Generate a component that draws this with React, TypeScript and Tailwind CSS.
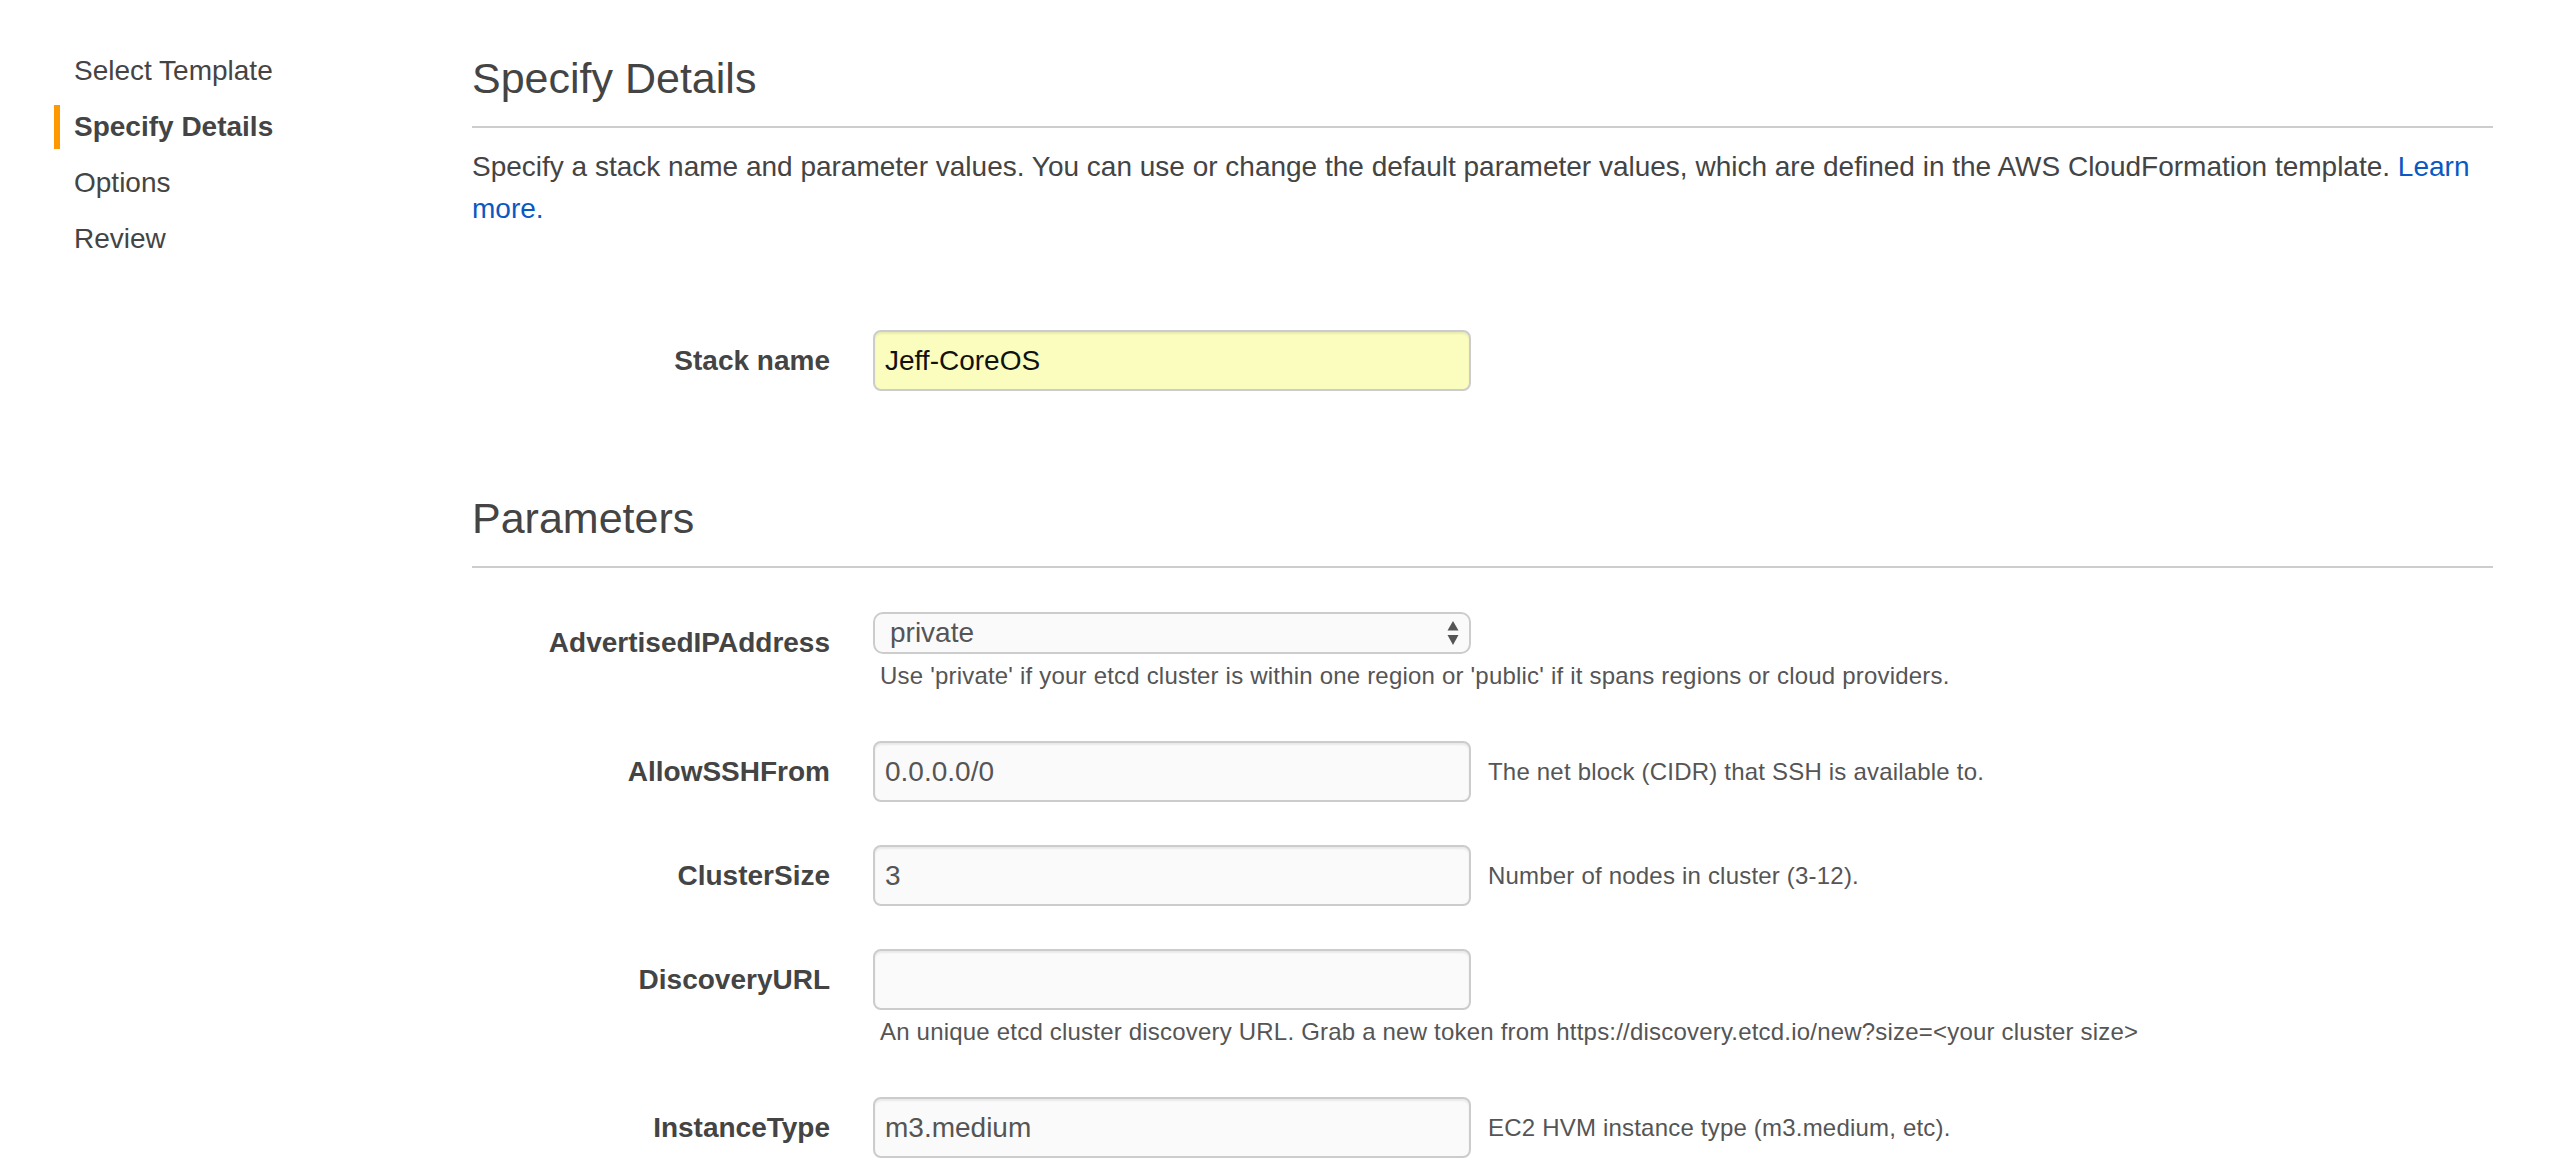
import React from "react";

type RowProps = {
  label: string;
  children: React.ReactNode;
  inline?: string;
  below?: string;
};

function Row({ label, children, inline, below }: RowProps) {
  return (
    <div className="flex mb-[43px]">
      <div className="w-[358px] shrink-0 mr-[43px] pt-[9px] text-right text-[28px] leading-[44px] font-bold text-[#444]">
        {label}
      </div>
      <div className="flex flex-col">
        <div className="flex items-center">
          {children}
          {inline && (
            <span className="ml-[17px] text-[24px] leading-[36px] tracking-[0.2px] text-[#555] whitespace-nowrap">
              {inline}
            </span>
          )}
        </div>
        {below && (
          <div className="mt-[4px] pb-[4px] pl-[7px] text-[24px] leading-[36px] tracking-[0.2px] text-[#555] whitespace-nowrap">
            {below}
          </div>
        )}
      </div>
    </div>
  );
}

function TextInput({ value, yellow }: { value: string; yellow?: boolean }) {
  return (
    <input
      readOnly
      value={value}
      className={
        yellow
          ? "w-[598px] h-[61px] shrink-0 rounded-[8px] border-2 border-[#cccccc] bg-[#fafdbd] shadow-[inset_0_2px_2px_rgba(0,0,0,0.07)] px-[10px] text-[28px] text-[#111] outline-none"
          : "w-[598px] h-[61px] shrink-0 rounded-[8px] border-2 border-[#cccccc] bg-[#fafafa] shadow-[inset_0_2px_2px_rgba(0,0,0,0.07)] px-[10px] text-[28px] text-[#555] outline-none"
      }
    />
  );
}

function SelectBox({ value }: { value: string }) {
  return (
    <div className="w-[598px] h-[42px] shrink-0 rounded-[10px] border-2 border-[#cccccc] bg-[#fafafa] flex items-center justify-between pl-[15px] pr-[9px] text-[28px] text-[#555]">
      <span>{value}</span>
      <svg width="14" height="30" viewBox="0 0 14 30" className="shrink-0">
        <polygon points="7,3 12.5,12.5 1.5,12.5" fill="#555" />
        <polygon points="1.5,17 12.5,17 7,27" fill="#555" />
      </svg>
    </div>
  );
}

export default function App() {
  const navItems = [
    { name: "Select Template", active: false },
    { name: "Specify Details", active: true },
    { name: "Options", active: false },
    { name: "Review", active: false },
  ];
  return (
    <div className="w-[2550px] h-[1172px] overflow-hidden bg-white flex font-['Liberation_Sans',Arial,Helvetica,sans-serif] text-[#444]">
      <nav className="w-[472px] shrink-0 pl-[54px] pt-[43px] flex flex-col">
        {navItems.map((it) => (
          <div key={it.name} className="py-[6px]">
            <div
              className={
                it.active
                  ? "border-l-[6px] border-[#ff9900] pl-[14px] text-[28px] leading-[44px] font-bold text-[#444]"
                  : "border-l-[6px] border-transparent pl-[14px] text-[28px] leading-[44px] text-[#444]"
              }
            >
              {it.name}
            </div>
          </div>
        ))}
      </nav>

      <main className="w-[2021px] shrink-0 pt-[52px]">
        <h1 className="text-[43px] leading-[52px] font-normal text-[#444]">Specify Details</h1>
        <div className="mt-[22px] h-[2px] bg-[#cdcdcd]" />
        <p className="mt-[18px] text-[28px] leading-[42px] text-[#444]">
          Specify a stack name and parameter values. You can use or change the default parameter values, which are defined in the AWS CloudFormation template.{" "}
          <a className="text-[#0a58c2]">Learn</a> <a className="text-[#0a58c2]">more.</a>
        </p>

        <div className="mt-[100px] flex">
          <div className="w-[358px] shrink-0 mr-[43px] pt-[9px] text-right text-[28px] leading-[44px] font-bold text-[#444]">
            Stack name
          </div>
          <TextInput value="Jeff-CoreOS" yellow />
        </div>

        <h2 className="mt-[101px] text-[43px] leading-[52px] font-normal text-[#444]">Parameters</h2>
        <div className="mt-[22px] h-[2px] bg-[#cdcdcd]" />

        <div className="mt-[44px]">
          <Row
            label="AdvertisedIPAddress"
            below="Use 'private' if your etcd cluster is within one region or 'public' if it spans regions or cloud providers."
          >
            <SelectBox value="private" />
          </Row>
          <Row label="AllowSSHFrom" inline="The net block (CIDR) that SSH is available to.">
            <TextInput value="0.0.0.0/0" />
          </Row>
          <Row label="ClusterSize" inline="Number of nodes in cluster (3-12).">
            <TextInput value="3" />
          </Row>
          <Row
            label="DiscoveryURL"
            below="An unique etcd cluster discovery URL. Grab a new token from https://discovery.etcd.io/new?size=<your cluster size>"
          >
            <TextInput value="" />
          </Row>
          <Row label="InstanceType" inline="EC2 HVM instance type (m3.medium, etc).">
            <TextInput value="m3.medium" />
          </Row>
        </div>
      </main>
    </div>
  );
}
